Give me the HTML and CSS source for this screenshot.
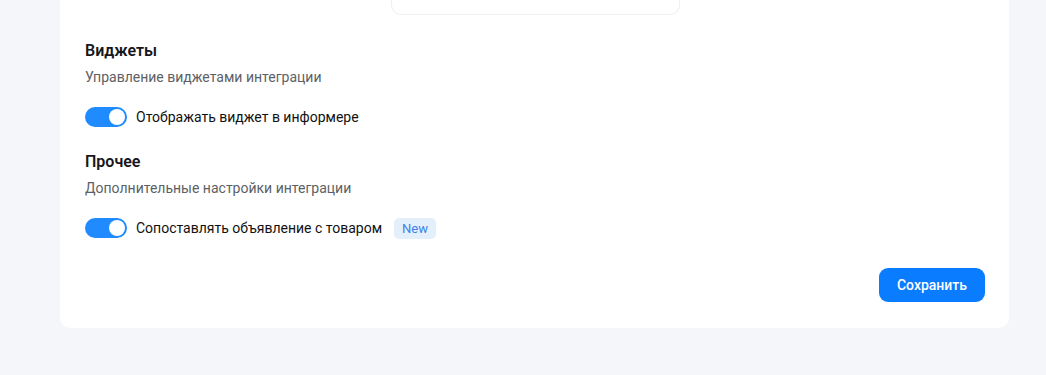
FILE: index.html
```html
<!DOCTYPE html>
<html lang="ru">
<head>
<meta charset="utf-8">
<link rel="stylesheet" href="styles.css">
</head>
<body>
<div class="card">
  <div class="top-box"></div>
  <section class="section">
    <h2 class="title">Виджеты</h2>
    <p class="desc">Управление виджетами интеграции</p>
    <div class="row">
      <span class="toggle"><span class="knob"></span></span>
      <span class="label">Отображать виджет в информере</span>
    </div>
  </section>
  <section class="section second">
    <h2 class="title">Прочее</h2>
    <p class="desc">Дополнительные настройки интеграции</p>
    <div class="row">
      <span class="toggle"><span class="knob"></span></span>
      <span class="label">Сопоставлять объявление с товаром</span>
      <span class="badge">New</span>
    </div>
  </section>
  <div class="actions">
    <button class="btn">Сохранить</button>
  </div>
</div>
</body>
</html>
```

FILE: styles.css
```css
* { box-sizing: border-box; }
html, body { margin: 0; padding: 0; }
body {
  background: #f5f6fa;
  font-family: Roboto, "Noto Sans", Arial, sans-serif;
  color: #1b1b1f;
  height: 375px;
  overflow: hidden;
}
.card {
  margin: -60px 0 0 60px;
  width: 949px;
  background: #fff;
  border-radius: 0 0 10px 10px;
  padding: 0 24px 26px 25px;
  display: flex;
  flex-direction: column;
}
.top-box {
  align-self: center;
  width: 289px;
  height: 75px;
  margin-left: 1px;
  border: 1px solid #efefef;
  border-top: none;
  border-radius: 0 0 10px 10px;
}
.section {
  display: flex;
  flex-direction: column;
  margin-top: 24px;
}
.section.second { margin-top: 22px; }
.title {
  margin: 0;
  font-size: 16px;
  font-weight: 600;
  line-height: 24px;
  color: #17171b;
}
.desc {
  margin: 4px 0 0;
  font-size: 14px;
  line-height: 20px;
  color: #5d5f66;
}
.row {
  display: flex;
  align-items: center;
  height: 22px;
  margin-top: 19px;
}
.toggle {
  width: 42px;
  height: 20px;
  border-radius: 10px;
  background: #1f8bff;
  display: flex;
  align-items: center;
  justify-content: flex-end;
  padding: 2px;
  flex-shrink: 0;
}
.knob {
  width: 16px;
  height: 16px;
  border-radius: 50%;
  background: #fff;
}
.label {
  margin-left: 9px;
  font-size: 14px;
  line-height: 20px;
  color: #111;
}
.badge {
  margin-left: 12px;
  height: 21px;
  padding: 0 8px;
  border-radius: 5px;
  background: #e4effc;
  color: #3b82e6;
  font-size: 13px;
  line-height: 21px;
}
.actions {
  display: flex;
  justify-content: flex-end;
  margin-top: 29px;
}
.btn {
  height: 34px;
  width: 106px;
  border: none;
  border-radius: 9px;
  background: #0a7cff;
  color: #fff;
  font-family: Roboto, Arial, sans-serif;
  font-size: 14px;
  font-weight: 500;
  padding: 0;
}
```
